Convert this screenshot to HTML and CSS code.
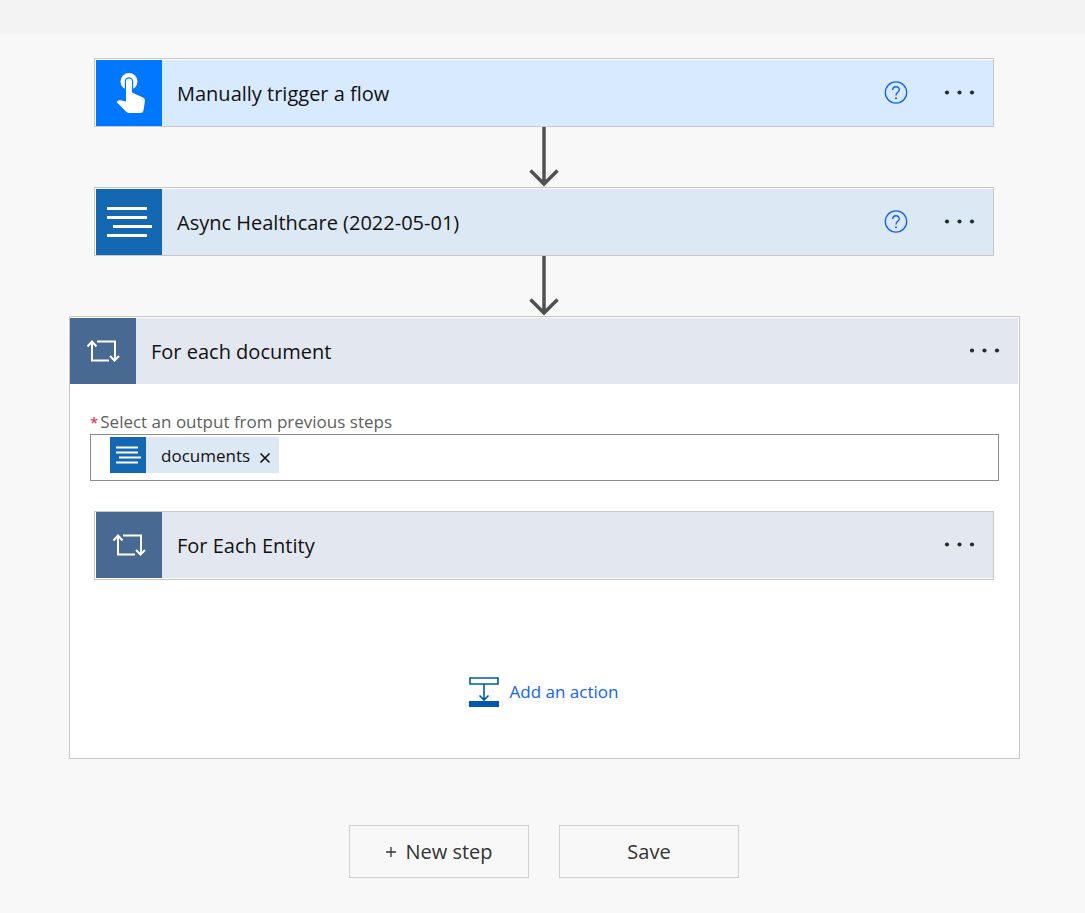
FILE: index.html
```html
<!DOCTYPE html>
<html lang="en">
<head>
<meta charset="utf-8">
<title>Flow designer</title>
<link rel="stylesheet" href="styles.css">
</head>
<body>
<svg class="defs" aria-hidden="true">
  <symbol id="lines" viewBox="0 0 66 66"><path d="M11 19.500H51M11 28.500H51M17 37.500H56M11 46.500H51" fill="none" stroke="#fff" stroke-width="3"/></symbol>
  <symbol id="loop" viewBox="0 0 66 66"><path d="M22 24V42.500H39M17.500 28.500L22 23.500L26.500 28.500M27 23.500H45V42M40 38L44.500 42.500L49 38" fill="none" stroke="#fff" stroke-width="2"/></symbol>
  <symbol id="dots" viewBox="0 0 32 24"><circle cx="3" cy="11.500" r="2.100"/><circle cx="15.500" cy="11.500" r="2.100"/><circle cx="28" cy="11.500" r="2.100"/></symbol>
  <symbol id="arrow" viewBox="0 0 32 60"><path d="M16 0V57M2.500 43.500L16 57L29.500 43.500" fill="none" stroke="#505050" stroke-width="3.500"/></symbol>
  <symbol id="help" viewBox="0 0 24 24"><circle cx="12" cy="11.500" r="10.700" fill="none" stroke="#1062fe" stroke-width="1.300"/><path d="M8.700 9C8.700 4.600 15.300 4.800 15.300 8.700C15.300 11.300 12 11.300 12 14.500" fill="none" stroke="#1062fe" stroke-width="1.400"/><circle cx="12" cy="17.200" r="1" fill="#1062fe"/></symbol>
</svg>
<header class="topbar"></header>
<main class="flow">
  <section class="card card-trigger">
    <svg class="tile tile-trigger" viewBox="0 0 66 66" aria-hidden="true">
      <circle cx="33" cy="21.500" r="8.500" fill="#fff"/>
      <path d="M28.800 32V21.500A4.200 4.200 0 0 1 37.200 21.500V32Z" fill="#0077ff"/>
      <path d="M30 41V21.500A3 3 0 0 1 36 21.500V32.500L47 37.500Q49 38.500 49 40.500L47.500 50.500Q47 53 44.500 53H33.500Q31.500 53 30 51.500L20.500 42L22 40.700Q23 40 24.500 40.300L30 41.500Z" fill="#fff"/>
    </svg>
    <h2 class="title">Manually trigger a flow</h2>
    <button class="icon-button" type="button" aria-label="Help"><svg class="help"><use href="#help"/></svg></button>
    <button class="icon-button" type="button" aria-label="More options"><svg class="dots"><use href="#dots"/></svg></button>
  </section>
  <svg class="arrow" aria-hidden="true"><use href="#arrow"/></svg>
  <section class="card card-async">
    <svg class="tile tile-async" aria-hidden="true"><use href="#lines"/></svg>
    <h2 class="title">Async Healthcare (2022-05-01)</h2>
    <button class="icon-button" type="button" aria-label="Help"><svg class="help"><use href="#help"/></svg></button>
    <button class="icon-button" type="button" aria-label="More options"><svg class="dots"><use href="#dots"/></svg></button>
  </section>
  <svg class="arrow" aria-hidden="true"><use href="#arrow"/></svg>
  <section class="scope">
    <div class="scope-head">
      <svg class="tile tile-loop" aria-hidden="true"><use href="#loop"/></svg>
      <h2 class="title">For each document</h2>
      <button class="icon-button" type="button" aria-label="More options"><svg class="dots"><use href="#dots"/></svg></button>
    </div>
    <div class="scope-body">
      <div class="label" id="output-label"><span class="required">*</span>Select an output from previous steps</div>
      <div class="field" role="group" aria-labelledby="output-label">
        <span class="token">
          <svg class="token-icon" viewBox="0 0 36 36" aria-hidden="true"><path d="M6 10.500H28M6 15.500H28M9 20.500H31M6 25.500H28" stroke="#fff" stroke-width="2"/></svg>
          <span class="token-text">documents</span>
          <button class="remove" type="button" aria-label="Remove documents"><svg class="cross" viewBox="0 0 12 12"><path d="M1.500 1.500L10.500 10.500M10.500 1.500L1.500 10.500" stroke="#111" stroke-width="1.600"/></svg></button>
        </span>
      </div>
      <section class="card card-nested">
        <svg class="tile tile-loop" aria-hidden="true"><use href="#loop"/></svg>
        <h3 class="title">For Each Entity</h3>
        <button class="icon-button" type="button" aria-label="More options"><svg class="dots"><use href="#dots"/></svg></button>
      </section>
      <button class="add-action" type="button">
        <svg class="add-icon" viewBox="0 0 30 30" aria-hidden="true"><path d="M1 1H29V7H1ZM15 7V23M10.500 18.500L15 23L19.500 18.500" fill="none" stroke="#0058ad" stroke-width="1.600"/><path d="M0 24H30V30H0Z" fill="#0058ad"/></svg>
        <span>Add an action</span>
      </button>
    </div>
  </section>
  <div class="actions">
    <button class="action" type="button"><svg class="plus" viewBox="0 0 12 12" aria-hidden="true"><path d="M6 1V11M1 6H11" stroke="#333" stroke-width="1.300"/></svg>New step</button>
    <button class="action" type="button">Save</button>
  </div>
</main>
</body>
</html>
```
FILE: styles.css
```css
* { box-sizing: border-box; }
body {
  margin: 0;
  background: #f8f8f8;
  color: #111;
  font-family: "Segoe UI", "Open Sans", "Noto Sans", sans-serif;
}
svg { display: block; flex: none; }
button {
  padding: 0;
  border: 0;
  background: none;
  color: inherit;
  font: inherit;
  cursor: pointer;
}
.defs { position: absolute; width: 0; height: 0; }
.topbar { height: 34px; background: #f3f3f3; }
.flow {
  display: flex;
  flex-direction: column;
  padding: 24px 65px 32px 69px;
}
.card {
  display: flex;
  margin: 0 26px 0 25px;
  padding: 1px 0 0 1px;
  border: 1px solid #c8c8c8;
}
.card-trigger { background: #d8eaff; box-shadow: inset 1px 1px #fff; }
.card-async { background: #dce8f4; box-shadow: inset 1px 1px #fff; }
.card-nested {
  margin: 30px 5px 0 4px;
  padding: 0 0 1px 1px;
  background: #e3e8f0;
  box-shadow: inset 1px -1px #fff;
}
.tile { width: 66px; height: 66px; }
.tile-trigger { background: #0077ff; }
.tile-async { background: #1368b1; }
.tile-loop { background: #486991; }
.title {
  flex: 1;
  margin: 0;
  padding: 2px 0 0 15px;
  font-size: 20px;
  font-weight: 400;
  line-height: 64px;
}
.icon-button { height: 66px; margin-right: 17px; fill: #2b2b2b; }
.help { width: 24px; height: 24px; margin-right: 19px; }
.dots { width: 32px; height: 24px; }
.arrow { align-self: center; width: 32px; height: 60px; margin-right: 1px; }
.scope {
  padding-top: 1px;
  border: 1px solid #c8c8c8;
  background: #fff;
}
.scope-head { display: flex; margin-right: 1px; background: #e3e8f0; }
.scope-body {
  display: flex;
  flex-direction: column;
  padding: 26px 20px 50px;
}
.label { color: #605e5c; font-size: 17px; line-height: 24px; }
.required { margin-right: 2px; color: #e3173e; font-size: 15px; }
.field {
  display: flex;
  height: 47px;
  padding: 2px 19px;
  border: 1px solid #8c8c8c;
}
.token {
  display: flex;
  align-items: center;
  height: 36px;
  padding-right: 8px;
  background: #dce8f4;
  font-size: 17px;
}
.token-icon { width: 36px; height: 36px; margin-right: 15px; background: #1368b1; }
.remove { margin: 6px 0 0 9px; }
.cross { width: 12px; height: 12px; }
.add-action {
  display: flex;
  align-items: center;
  align-self: center;
  gap: 11px;
  margin: 96px 2px 0 0;
  color: #1062fe;
  font-size: 17px;
  line-height: 32px;
}
.add-icon { width: 30px; height: 30px; }
.actions {
  display: flex;
  justify-content: center;
  gap: 30px;
  margin: 66px 1px 0 0;
}
.action {
  display: flex;
  align-items: center;
  justify-content: center;
  gap: 8px;
  width: 180px;
  height: 53px;
  border: 1px solid #d0d0d0;
  color: #333;
  font-size: 20px;
}
.plus { width: 12px; height: 12px; }
```
